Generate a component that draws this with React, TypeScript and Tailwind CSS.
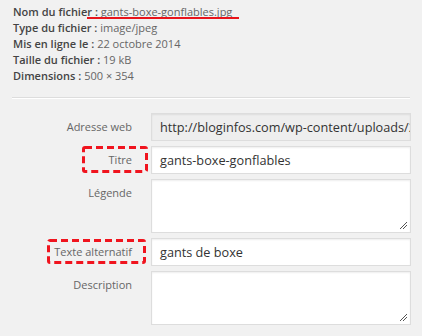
const font = { fontFamily: "'Open Sans', 'Liberation Sans', sans-serif" };

const details = [
  { label: "Nom du fichier :", value: "gants-boxe-gonflables.jpg" },
  { label: "Type du fichier :", value: "image/jpeg" },
  { label: "Mis en ligne le :", value: "22 octobre 2014" },
  { label: "Taille du fichier :", value: "19 kB" },
  { label: "Dimensions :", value: "500 × 354" },
];

// red dashed annotation frame drawn over a label
function DashedBox({ className, w, h }: { className: string; w: number; h: number }) {
  return (
    <svg className={`absolute ${className}`} width={w} height={h} viewBox={`0 0 ${w} ${h}`}>
      <rect
        x="1.5"
        y="1.5"
        width={w - 3}
        height={h - 3}
        rx="1.5"
        fill="none"
        stroke="#f0141e"
        strokeWidth="3"
        strokeDasharray="7 4"
      />
    </svg>
  );
}

function Field({
  label,
  value,
  multiline,
  readOnly,
  marked,
}: {
  label: string;
  value?: string;
  multiline?: boolean;
  readOnly?: boolean;
  marked?: "titre" | "alt";
}) {
  return (
    <div className="flex flex-row items-start">
      {/* LABEL */}
      <div className="relative w-[132px] shrink-0 pt-[6px] text-right text-[11px] leading-[16px] text-[#666]">
        {label}
        {marked === "titre" && <DashedBox className="left-[82px] top-[0px]" w={66} h={27} />}
        {marked === "alt" && <DashedBox className="left-[47px] top-[1px]" w={99} h={25} />}
      </div>
      {/* INPUT */}
      {multiline ? (
        <div className="relative ml-[19px] w-[260px] h-[54px] bg-white border border-[#ddd] shadow-[inset_0_1px_2px_rgba(0,0,0,0.07)]">
          <svg className="absolute right-[2px] bottom-[2px]" width="9" height="9" viewBox="0 0 9 9">
            <path d="M8 1 L1 8 M8 4 L4 8" stroke="#555" strokeWidth="1" />
          </svg>
        </div>
      ) : (
        <div
          className={`ml-[19px] w-[260px] h-[28px] overflow-hidden whitespace-nowrap border border-[#ddd] pl-[8px] text-[12.7px] leading-[26px] text-[#333] shadow-[inset_0_1px_2px_rgba(0,0,0,0.07)] ${
            readOnly ? "bg-[#eee]" : "bg-white"
          }`}
        >
          {value}
        </div>
      )}
    </div>
  );
}

export default function App() {
  return (
    <div className="w-[422px] h-[336px] overflow-hidden bg-[#f1f1f1]" style={font}>
      {/* FILE DETAILS */}
      <div className="pl-[13px] pt-[4px] text-[11px] leading-[16px] text-[#666]">
        {details.map((d, idx) => (
          <div key={`detail-${idx}`} className="relative">
            <span className="font-semibold text-[#444]">{d.label}</span> {d.value}
            {idx === 0 && (
              <span className="absolute left-[74px] top-[13px] w-[152px] h-[2px] bg-[#e8141b]" />
            )}
          </div>
        ))}
      </div>

      {/* SEPARATOR */}
      <div className="mx-[12px] mt-[13px] border-b border-[#ddd] shadow-[0_1px_0_#fff]" />

      {/* FIELDS */}
      <div className="mt-[15px] flex flex-col gap-[5px]">
        <Field label="Adresse web" value="http://bloginfos.com/wp-content/uploads/2014/10/gants-boxe-gonflables.jpg" readOnly />
        <Field label="Titre" value="gants-boxe-gonflables" marked="titre" />
        <Field label="Légende" multiline />
        <Field label="Texte alternatif" value="gants de boxe" marked="alt" />
        <Field label="Description" multiline />
      </div>
    </div>
  );
}
